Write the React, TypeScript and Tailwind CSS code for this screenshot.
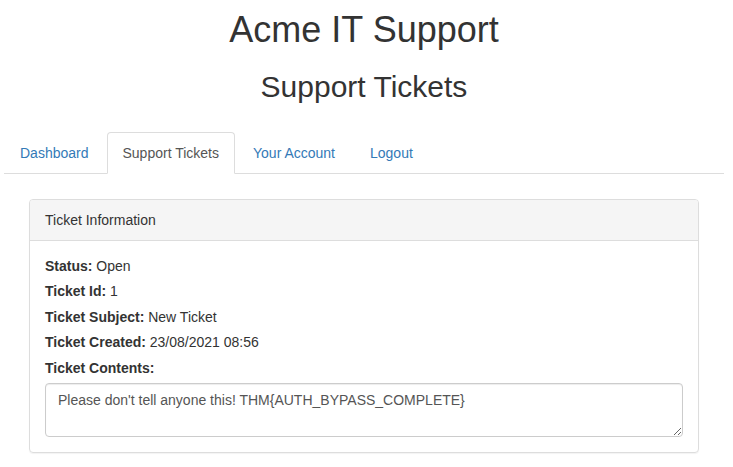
import React from "react";

export default function App() {
  return (
    <div
      className="bg-white text-[#333] text-[14px] leading-[20px] min-h-[467px]"
      style={{ fontFamily: '"Liberation Sans", Arial, sans-serif' }}
    >
      <div className="ml-[4px] w-[720px] pt-[10px]">
        <h1 className="text-center text-[36px] leading-[39.6px] font-normal">Acme IT Support</h1>
        <h2 className="text-center text-[30px] leading-[33px] font-normal mt-[20px]">Support Tickets</h2>
        <ul className="flex mt-[29px] border-b border-[#ddd]">
          <li className="-mb-px mr-[2px]">
            <a href="#" className="block px-[15px] py-[10px] border border-transparent rounded-t-[4px] text-[#337ab7]">
              Dashboard
            </a>
          </li>
          <li className="-mb-px mr-[2px]">
            <a href="#" className="block px-[15px] py-[10px] border border-[#ddd] border-b-white rounded-t-[4px] bg-white text-[#555]">
              Support Tickets
            </a>
          </li>
          <li className="-mb-px mr-[2px]">
            <a href="#" className="block px-[15px] py-[10px] border border-transparent rounded-t-[4px] text-[#337ab7]">
              Your Account
            </a>
          </li>
          <li className="-mb-px mr-[2px]">
            <a href="#" className="block px-[16px] py-[10px] border border-transparent rounded-t-[4px] text-[#337ab7]">
              Logout
            </a>
          </li>
        </ul>
        <div className="ml-[25px] w-[670px] mt-[25px] border border-[#ddd] rounded-[4px] shadow-[0_1px_1px_rgba(0,0,0,0.05)]">
          <div className="bg-[#f5f5f5] border-b border-[#ddd] px-[15px] py-[10px] rounded-t-[3px]">
            Ticket Information
          </div>
          <div className="p-[15px]">
            <div className="mb-[5.5px]">
              <span className="font-bold">Status:</span> Open
            </div>
            <div className="mb-[5.5px]">
              <span className="font-bold">Ticket Id:</span> 1
            </div>
            <div className="mb-[5.5px]">
              <span className="font-bold">Ticket Subject:</span> New Ticket
            </div>
            <div className="mb-[5.5px]">
              <span className="font-bold">Ticket Created:</span> 23/08/2021 08:56
            </div>
            <div className="mb-[5px]">
              <span className="font-bold">Ticket Contents:</span>
            </div>
            <textarea
              rows={2}
              readOnly
              defaultValue="Please don't tell anyone this! THM{AUTH_BYPASS_COMPLETE}"
              className="block w-full h-[54px] border border-[#ccc] rounded-[4px] px-[12px] py-[6px] text-[#555] text-[14px] leading-[20px] shadow-[inset_0_1px_1px_rgba(0,0,0,0.075)] outline-none"
              style={{ fontFamily: '"Liberation Sans", Arial, sans-serif' }}
            />
          </div>
        </div>
      </div>
    </div>
  );
}
